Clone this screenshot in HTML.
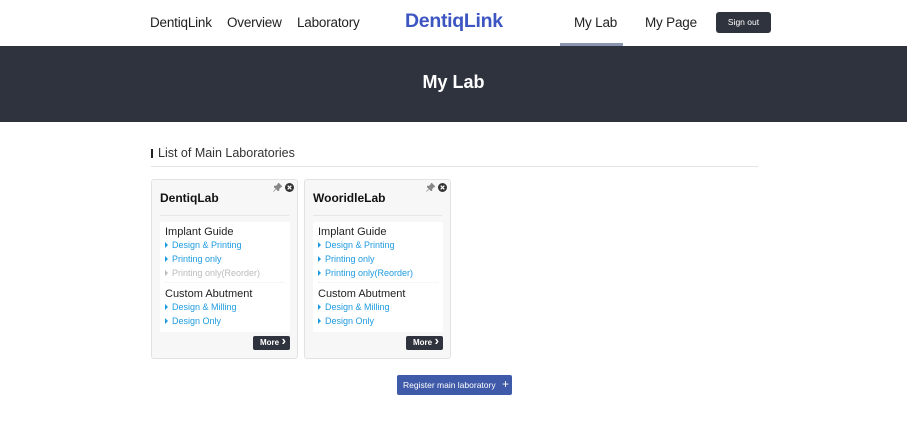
<!DOCTYPE html>
<html><head><meta charset="utf-8"><style>
*{margin:0;padding:0;box-sizing:border-box}
body{width:907px;height:445px;background:#fff;font-family:"Liberation Sans",sans-serif;position:relative;overflow:hidden;color:#222}
.a{position:absolute;white-space:nowrap}
.nav{font-size:13.5px;color:#222;top:15px;letter-spacing:-0.2px}
.hero{top:46px;left:0;width:907px;height:76px;background:#2f333d;color:#fff;font-size:18px;font-weight:bold;text-align:center;line-height:72px}
.card{top:179px;width:147px;height:180px;background:#f7f7f7;border:1px solid #e2e2e2;border-radius:3px}
.card h3{position:absolute;left:8px;top:11px;font-size:12px;font-weight:bold;color:#111}
.card .ln{position:absolute;left:8px;right:8px;top:35px;border-top:1px solid #e6e6e6}
.inner{position:absolute;left:8px;top:42px;width:130px;height:110px;background:#fff;border-radius:2px}
.inner .t{position:absolute;left:5px;font-size:11px;color:#222}
.inner .l{position:absolute;left:5px;font-size:9px;color:#1e9be0}
.inner .l:before{content:"";display:inline-block;border-left:3px solid currentColor;border-top:3px solid transparent;border-bottom:3px solid transparent;margin-right:4px;vertical-align:0px}
.inner .g{color:#bbb}
.inner .d{position:absolute;left:5px;right:5px;top:60px;border-top:1px dotted #eee}
.more{position:absolute;right:7px;bottom:8px;width:37px;height:14px;background:#2f333d;color:#fff;font-size:8px;font-weight:bold;border-radius:2px;line-height:14px;padding-left:7px}
.more:after{content:"›";position:absolute;right:4px;top:-2px;font-size:13px}
.ic{position:absolute;top:3px}
</style></head><body>
<div class="a nav" style="left:150px">DentiqLink</div>
<div class="a nav" style="left:227px">Overview</div>
<div class="a nav" style="left:297px">Laboratory</div>
<div class="a" style="left:405px;top:10px;font-size:19.5px;font-weight:bold;color:#3c55c0;letter-spacing:-0.3px">DentiqLink</div>
<div class="a nav" style="left:574px">My Lab</div>
<div class="a" style="left:560px;top:43px;width:63px;height:3px;background:#8a95b0"></div>
<div class="a nav" style="left:645px">My Page</div>
<div class="a" style="left:716px;top:12px;width:55px;height:21px;background:#2f333d;border-radius:3px;color:#fff;font-size:8.5px;text-align:center;line-height:21px">Sign out</div>
<div class="a hero">My Lab</div>
<div class="a" style="left:151px;top:149px;width:2px;height:9px;background:#222"></div>
<div class="a" style="left:158px;top:146px;font-size:12.5px;color:#333">List of Main Laboratories</div>
<div class="a" style="left:151px;top:166px;width:607px;height:1px;background:#e3e3e3"></div>

<div class="a card" style="left:151px">
<svg class="ic" style="left:121px" width="9" height="9" viewBox="0 0 10 10"><path d="M6 0L10 4 8.5 4.5 6.5 6.5 6.5 8.5 5.5 8.5 1.5 4.5 1.5 3.5 3.5 3.5 5.5 1.5Z M3 7L0.5 9.5" fill="#888" stroke="#888" stroke-width="0.8"/></svg>
<svg class="ic" style="left:133px" width="9" height="9" viewBox="0 0 10 10"><circle cx="5" cy="5" r="5" fill="#333"/><path d="M3 3L7 7M7 3L3 7" stroke="#fff" stroke-width="1.4"/></svg>
<h3>DentiqLab</h3><div class="ln"></div>
<div class="inner">
<div class="t" style="top:4px">Implant Guide</div>
<div class="l" style="top:18px">Design &amp; Printing</div>
<div class="l" style="top:32px">Printing only</div>
<div class="l g" style="top:46px">Printing only(Reorder)</div>
<div class="d"></div>
<div class="t" style="top:66px">Custom Abutment</div>
<div class="l" style="top:80px">Design &amp; Milling</div>
<div class="l" style="top:94px">Design Only</div>
</div>
<div class="more">More</div>
</div>

<div class="a card" style="left:304px">
<svg class="ic" style="left:121px" width="9" height="9" viewBox="0 0 10 10"><path d="M6 0L10 4 8.5 4.5 6.5 6.5 6.5 8.5 5.5 8.5 1.5 4.5 1.5 3.5 3.5 3.5 5.5 1.5Z M3 7L0.5 9.5" fill="#888" stroke="#888" stroke-width="0.8"/></svg>
<svg class="ic" style="left:133px" width="9" height="9" viewBox="0 0 10 10"><circle cx="5" cy="5" r="5" fill="#333"/><path d="M3 3L7 7M7 3L3 7" stroke="#fff" stroke-width="1.4"/></svg>
<h3>WooridleLab</h3><div class="ln"></div>
<div class="inner">
<div class="t" style="top:4px">Implant Guide</div>
<div class="l" style="top:18px">Design &amp; Printing</div>
<div class="l" style="top:32px">Printing only</div>
<div class="l" style="top:46px">Printing only(Reorder)</div>
<div class="d"></div>
<div class="t" style="top:66px">Custom Abutment</div>
<div class="l" style="top:80px">Design &amp; Milling</div>
<div class="l" style="top:94px">Design Only</div>
</div>
<div class="more">More</div>
</div>

<div class="a" style="left:397px;top:375px;width:115px;height:20px;background:#3f5aa8;border-radius:2px;color:#fff;font-size:8.5px;line-height:20px;padding-left:6px">Register main laboratory <span style="font-size:12px;position:absolute;right:3px;top:-1px">+</span></div>
</body></html>
